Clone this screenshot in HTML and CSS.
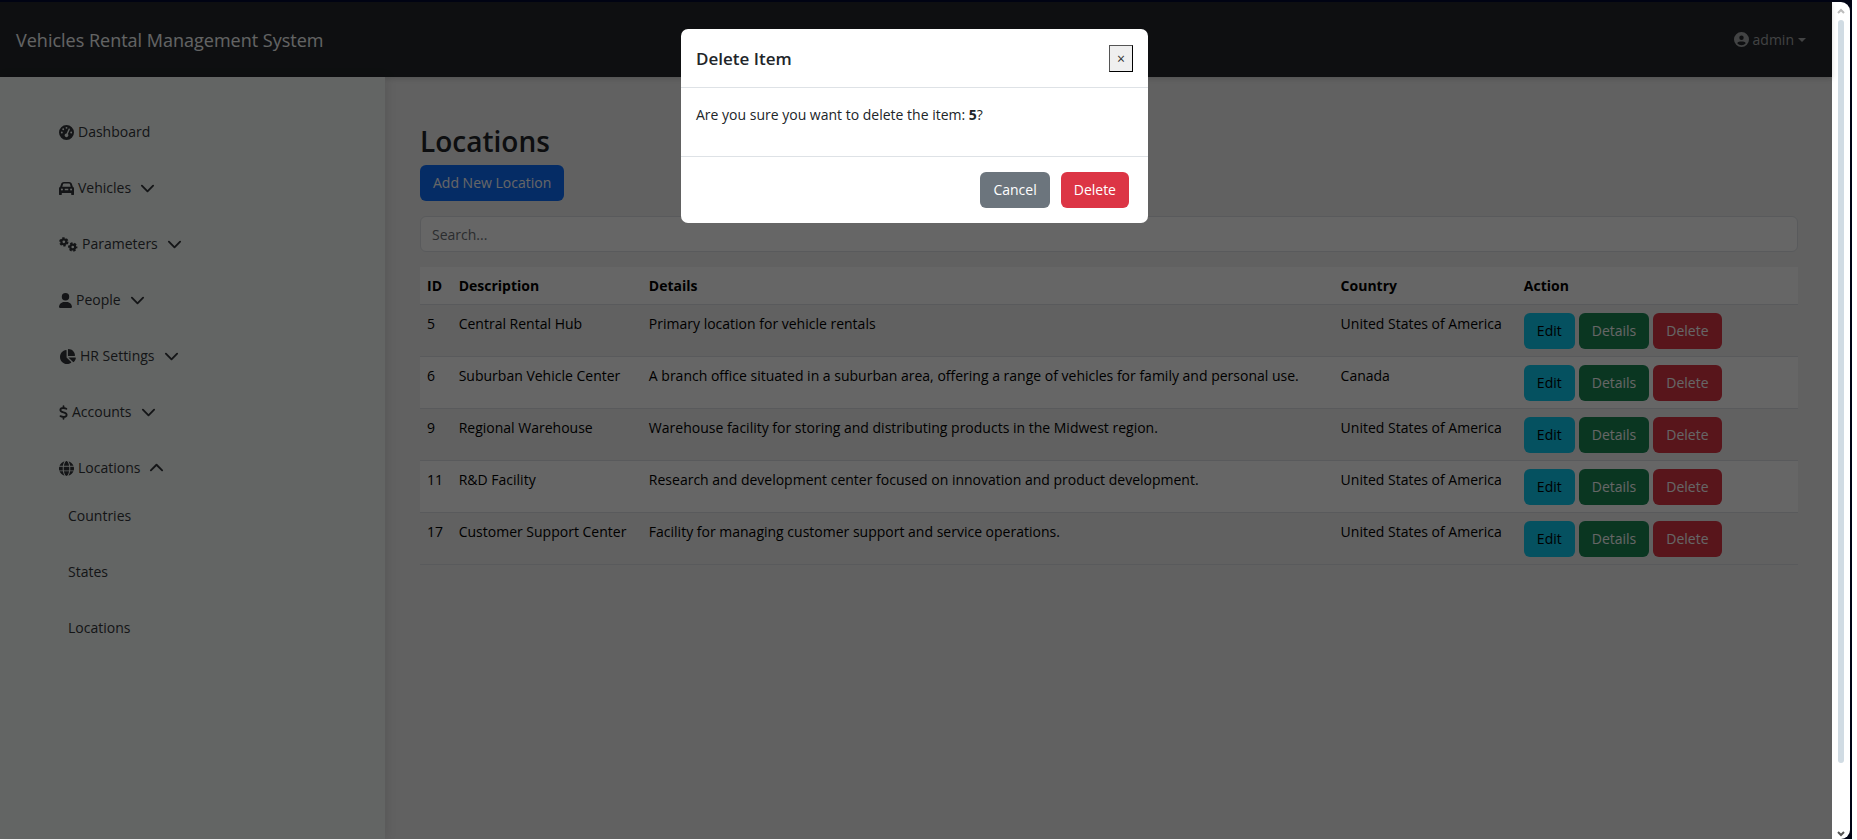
FILE: index.html
```html
<!DOCTYPE html>
<html lang="en">
<head>
<meta charset="utf-8">
<title>Vehicles Rental Management System</title>
<link rel="stylesheet" href="styles.css">
</head>
<body>
<div class="window">
  <div class="viewport">
    <header class="navbar">
      <a class="brand" href="#">Vehicles Rental Management System</a>
      <button class="user-menu" type="button">
        <svg class="icon" viewBox="0 0 512 512"><path fill-rule="evenodd" d="M256 0a256 256 0 1 0 0 512a256 256 0 1 0 0-512zM256 120a76 76 0 1 1 0 152a76 76 0 1 1 0-152zM256 448c-58 0-110-26-145-66c14-36 50-62 92-62h106c42 0 78 26 92 62c-35 40-87 66-145 66z"/></svg>
        <span>admin</span><span class="caret"></span>
      </button>
    </header>
    <div class="layout">
      <nav class="sidebar">
        <a class="nav-item" href="#"><svg class="icon" viewBox="0 0 512 512"><path fill-rule="evenodd" d="M0 256a256 256 0 1 1 512 0A256 256 0 1 1 0 256zM288 96a32 32 0 1 0-64 0 32 32 0 1 0 64 0zM256 416c35 0 64-29 64-64c0-17-7-33-18-45L370 154c5-12 0-26-12-32s-26 0-32 12L258 288h-2c-35 0-64 29-64 64s29 64 64 64zM176 144a32 32 0 1 0-64 0 32 32 0 1 0 64 0zM96 288a32 32 0 1 0 0-64 32 32 0 1 0 0 64zM448 256a32 32 0 1 0-64 0 32 32 0 1 0 64 0z"/></svg><span>Dashboard</span></a>
        <a class="nav-item" href="#"><svg class="icon" viewBox="0 0 512 512"><path fill-rule="evenodd" d="M140 104L112 192H400l-28-88C368 92 358 84 346 84H166c-12 0-22 8-26 20zM40 197L75 96C88 58 125 32 165 32H347c41 0 77 26 90 64l35 101c24 9 40 32 40 59V448c0 18-14 32-32 32H448c-18 0-32-14-32-32V408H96v40c0 18-14 32-32 32H32c-18 0-32-14-32-32V256c0-27 16-50 40-59zM136 290a36 36 0 1 0 -72 0 36 36 0 1 0 72 0zM412 326a36 36 0 1 0 0-72 36 36 0 1 0 0 72zM196 262h120v56h-120z"/></svg><span>Vehicles</span><svg class="chevron" viewBox="0 0 16 16"><path d="M2 5l6 6 6-6"/></svg></a>
        <a class="nav-item" href="#"><svg class="icon icon-gears" viewBox="0 0 640 512"><g fill="none" stroke="currentColor"><circle cx="160" cy="166" r="84" stroke-width="76"/><circle cx="160" cy="166" r="130" stroke-width="60" stroke-dasharray="78 58"/><circle cx="465" cy="342" r="84" stroke-width="76"/><circle cx="465" cy="342" r="130" stroke-width="60" stroke-dasharray="78 58" stroke-dashoffset="34"/></g></svg><span>Parameters</span><svg class="chevron" viewBox="0 0 16 16"><path d="M2 5l6 6 6-6"/></svg></a>
        <a class="nav-item" href="#"><svg class="icon icon-user" viewBox="0 0 448 512"><path d="M224 256A128 128 0 1 0 224 0a128 128 0 1 0 0 256zm-45.700 48C79.800 304 0 383.800 0 482.300C0 498.700 13.300 512 29.700 512H418.300c16.400 0 29.700-13.300 29.700-29.700C448 383.800 368.200 304 269.700 304H178.300z"/></svg><span>People</span><svg class="chevron" viewBox="0 0 16 16"><path d="M2 5l6 6 6-6"/></svg></a>
        <a class="nav-item" href="#"><svg class="icon icon-pie" viewBox="0 0 576 512"><path d="M304 240V16.600c0-9 7-16.600 16-16.600C443.700 0 544 100.300 544 224c0 9-7.600 16-16.600 16H304zM32 272C32 150.700 122.100 50.300 239 34.300c9.200-1.300 17 6.100 17 15.400V288L412.500 444.500c6.700 6.700 6.200 17.700-1.500 23.100C371.800 495.600 323.800 512 272 512C139.500 512 32 404.600 32 272zm526.400 16c9.300 0 16.600 7.800 15.400 17c-7.700 55.900-34.600 105.600-73.900 142.300c-6 5.600-15.400 5.200-21.200-.7L320 288H558.400z"/></svg><span>HR Settings</span><svg class="chevron" viewBox="0 0 16 16"><path d="M2 5l6 6 6-6"/></svg></a>
        <a class="nav-item" href="#"><svg class="icon icon-dollar" viewBox="0 0 320 512"><path fill="none" stroke="currentColor" stroke-width="64" stroke-linecap="round" d="M160 32V96M160 416V480M262 123C225 106 190 96 150 96C95 96 48 120 48 170C48 282 272 220 272 336C272 392 220 416 165 416C125 416 90 402 52 386"/></svg><span>Accounts</span><svg class="chevron" viewBox="0 0 16 16"><path d="M2 5l6 6 6-6"/></svg></a>
        <a class="nav-item" href="#"><svg class="icon" viewBox="0 0 512 512"><path d="M352 256c0 22.200-1.200 43.600-3.300 64H163.300c-2.200-20.400-3.300-41.800-3.300-64s1.200-43.600 3.300-64H348.700c2.200 20.400 3.300 41.800 3.300 64zm28.800-64H503.900c5.300 20.500 8.100 41.900 8.100 64s-2.800 43.500-8.100 64H380.800c2.100-20.600 3.200-42 3.200-64s-1.100-43.400-3.200-64zm112.600-32H376.700c-10-63.900-29.800-117.400-55.300-151.600c78.300 20.700 142 77.500 171.900 151.600zm-149.100 0H167.700c6.100-36.400 15.500-68.600 27-94.700c10.500-23.600 22.200-40.700 33.500-51.500C239.400 3.200 248.700 0 256 0s16.600 3.200 27.800 13.800c11.300 10.800 23 27.900 33.500 51.500c11.600 26 20.900 58.200 27 94.700zm-209 0H18.600C48.600 85.900 112.200 29.100 190.600 8.400C165.100 42.600 145.300 96.100 135.300 160zM8.100 192H131.200c-2.100 20.600-3.200 42-3.200 64s1.100 43.400 3.200 64H8.100C2.800 299.500 0 278.100 0 256s2.800-43.500 8.100-64zM194.700 446.600c-11.600-26-20.900-58.200-27-94.600H344.300c-6.100 36.400-15.500 68.600-27 94.600c-10.500 23.600-22.200 40.700-33.500 51.500C272.600 508.800 263.300 512 256 512s-16.600-3.200-27.800-13.800c-11.300-10.800-23-27.900-33.500-51.500zM135.300 352c10 63.900 29.800 117.400 55.300 151.600C112.200 482.900 48.600 426.100 18.600 352H135.300zm358.100 0c-30 74.100-93.600 130.900-171.900 151.600c25.500-34.200 45.200-87.700 55.300-151.600H493.400z"/></svg><span>Locations</span><svg class="chevron" viewBox="0 0 16 16"><path d="M2 10l6-6 6 6"/></svg></a>
        <div class="submenu">
          <a class="nav-item" href="#">Countries</a>
          <a class="nav-item" href="#">States</a>
          <a class="nav-item" href="#">Locations</a>
        </div>
      </nav>
      <main class="content">
        <h1>Locations</h1>
        <button class="btn primary" type="button">Add New Location</button>
        <input class="search" type="text" placeholder="Search..." aria-label="Search">
        <table class="grid">
          <colgroup><col class="c-id"><col class="c-desc"><col class="c-details"><col class="c-country"><col class="c-action"></colgroup>
          <thead><tr><th>ID</th><th>Description</th><th>Details</th><th>Country</th><th>Action</th></tr></thead>
          <tbody>
            <tr><td>5</td><td>Central Rental Hub</td><td>Primary location for vehicle rentals</td><td>United States of America</td><td><div class="actions"><button class="btn info" type="button">Edit</button><button class="btn success" type="button">Details</button><button class="btn danger" type="button">Delete</button></div></td></tr>
            <tr><td>6</td><td>Suburban Vehicle Center</td><td>A branch office situated in a suburban area, offering a range of vehicles for family and personal use.</td><td>Canada</td><td><div class="actions"><button class="btn info" type="button">Edit</button><button class="btn success" type="button">Details</button><button class="btn danger" type="button">Delete</button></div></td></tr>
            <tr><td>9</td><td>Regional Warehouse</td><td>Warehouse facility for storing and distributing products in the Midwest region.</td><td>United States of America</td><td><div class="actions"><button class="btn info" type="button">Edit</button><button class="btn success" type="button">Details</button><button class="btn danger" type="button">Delete</button></div></td></tr>
            <tr><td>11</td><td>R&amp;D Facility</td><td>Research and development center focused on innovation and product development.</td><td>United States of America</td><td><div class="actions"><button class="btn info" type="button">Edit</button><button class="btn success" type="button">Details</button><button class="btn danger" type="button">Delete</button></div></td></tr>
            <tr><td>17</td><td>Customer Support Center</td><td>Facility for managing customer support and service operations.</td><td>United States of America</td><td><div class="actions"><button class="btn info" type="button">Edit</button><button class="btn success" type="button">Details</button><button class="btn danger" type="button">Delete</button></div></td></tr>
          </tbody>
        </table>
      </main>
    </div>
    <div class="backdrop">
      <section class="modal" role="dialog" aria-labelledby="modal-title">
        <div class="modal-header">
          <h2 id="modal-title">Delete Item</h2>
          <button class="close" type="button" aria-label="Close">×</button>
        </div>
        <div class="modal-body"><p>Are you sure you want to delete the item: <b>5</b>?</p></div>
        <div class="modal-footer">
          <button class="btn secondary" type="button">Cancel</button>
          <button class="btn danger" type="button">Delete</button>
        </div>
      </section>
    </div>
  </div>
  <div class="scrollbar">
    <svg class="arrow up" viewBox="0 0 8 6"><path d="M1 5l3-3 3 3"/></svg>
    <div class="track"><div class="thumb"></div></div>
    <svg class="arrow" viewBox="0 0 8 6"><path d="M1 1l3 3 3-3"/></svg>
  </div>
</div>
</body>
</html>
```
FILE: styles.css
```css
* { box-sizing: border-box; }
body {
  margin: 0;
  background: #000414;
  color: #212529;
  font-family: "Open Sans", "Noto Sans", sans-serif;
  font-size: 14px;
  line-height: 22px;
}
a { color: inherit; text-decoration: none; }
button, input { font: inherit; }
h1, h2, p { margin: 0; }
.window {
  display: flex;
  height: 100vh;
  padding-top: 2px;
  border-right: 5px solid #fff;
  border-bottom: 1px solid #fff;
}
.viewport {
  position: relative;
  display: flex;
  flex: 1;
  flex-direction: column;
  background: #f2f2f2;
}
.navbar {
  display: flex;
  align-items: center;
  justify-content: space-between;
  height: 75px;
  padding: 0 26px 0 16px;
  background: #23272b;
  color: #f8f9fa;
  box-shadow: 0 2px 5px rgba(0, 0, 0, .15);
}
.brand { font-size: 18px; }
.user-menu {
  display: flex;
  align-items: center;
  gap: 4px;
  padding: 0;
  border: 0;
  background: none;
  color: #a6a8aa;
}
.caret {
  border: 4px solid transparent;
  border-top-color: currentColor;
  border-bottom: 0;
}
.layout { display: flex; flex: 1; }
.sidebar {
  display: flex;
  flex: 0 0 385px;
  flex-direction: column;
  padding: 27px 32px 0 59px;
  background: #f7fcf9;
  color: #33363a;
  box-shadow: 2px 0 10px rgba(0, 0, 0, .1);
}
.nav-item {
  display: flex;
  align-items: center;
  gap: 4px;
  height: 56px;
}
.submenu { margin-top: -8px; padding-left: 9px; }
.icon { width: 15px; height: 15px; fill: currentColor; }
.icon-gears { width: 19px; }
.icon-user { width: 13px; }
.icon-pie { width: 17px; }
.icon-dollar { width: 9px; }
.chevron {
  width: 15px;
  height: 15px;
  margin-left: 5px;
  fill: none;
  stroke: currentColor;
  stroke-width: 2;
  stroke-linecap: round;
  stroke-linejoin: round;
}
.content { flex: 1; padding: 46px 34px 0 35px; }
.content h1 { font-size: 28px; font-weight: 600; line-height: 36px; margin-bottom: 6px; }
.btn {
  height: 36px;
  padding: 0 13px;
  border: 0;
  border-radius: 6px;
  color: #fff;
}
.primary { background: #0d6efd; }
.info { background: #0dcaf0; color: #000; }
.success { background: #198754; }
.danger { background: #dc3545; }
.secondary { background: #6c757d; }
.search {
  display: block;
  width: 100%;
  height: 36px;
  margin: 15px 0 15px;
  padding: 0 11px;
  border: 1px solid #dee2e6;
  border-radius: 6px;
  background: #fff;
}
.search::placeholder { color: #6c7075; opacity: 1; }
.grid {
  width: 100%;
  border-collapse: collapse;
  table-layout: fixed;
  background: #fff;
  color: #000;
}
.c-id { width: 2.3%; }
.c-desc { width: 13.8%; }
.c-details { width: 50.2%; }
.c-country { width: 13.3%; }
.grid th, .grid td {
  padding: 8px 0 7px 7px;
  border-bottom: 1px solid #dee2e6;
  text-align: left;
  vertical-align: top;
  white-space: nowrap;
}
.grid tbody tr:nth-child(odd) { background: #f2f2f2; }
.actions { display: flex; gap: 4px; }
.backdrop {
  position: absolute;
  inset: 0;
  padding: 27px 3px 0 0;
  background: rgba(0, 0, 0, .6);
}
.modal {
  width: 467px;
  margin: 0 auto;
  border-radius: 7px;
  background: #fff;
}
.modal-header {
  display: flex;
  align-items: center;
  justify-content: space-between;
  padding: 16px 15px 15px;
  border-bottom: 1px solid #dee2e6;
}
.modal-header h2 { font-size: 17px; font-weight: 600; line-height: 26px; }
.close {
  width: 24px;
  height: 27px;
  padding: 0;
  border: 1px solid #000;
  border-top-color: #555;
  border-left-color: #555;
  background: #efefef;
  color: #333;
  line-height: 20px;
}
.modal-body { padding: 16px 15px 30px; border-bottom: 1px solid #dee2e6; }
.modal-footer {
  display: flex;
  justify-content: flex-end;
  gap: 11px;
  padding: 15px 19px;
}
.scrollbar {
  display: flex;
  flex: 0 0 18px;
  flex-direction: column;
  align-items: center;
  margin-right: 2px;
  padding: 6px 0 2px;
  border-radius: 0 9px 9px 0;
  background: #fff;
}
.track { flex: 1; padding: 6px 0 68px; }
.thumb { width: 6px; height: 100%; border-radius: 3px; background: #d0dbe3; }
.arrow { width: 8px; height: 6px; fill: none; stroke: #555; stroke-width: 2; }
.arrow.up { stroke: #bbb; }
```
